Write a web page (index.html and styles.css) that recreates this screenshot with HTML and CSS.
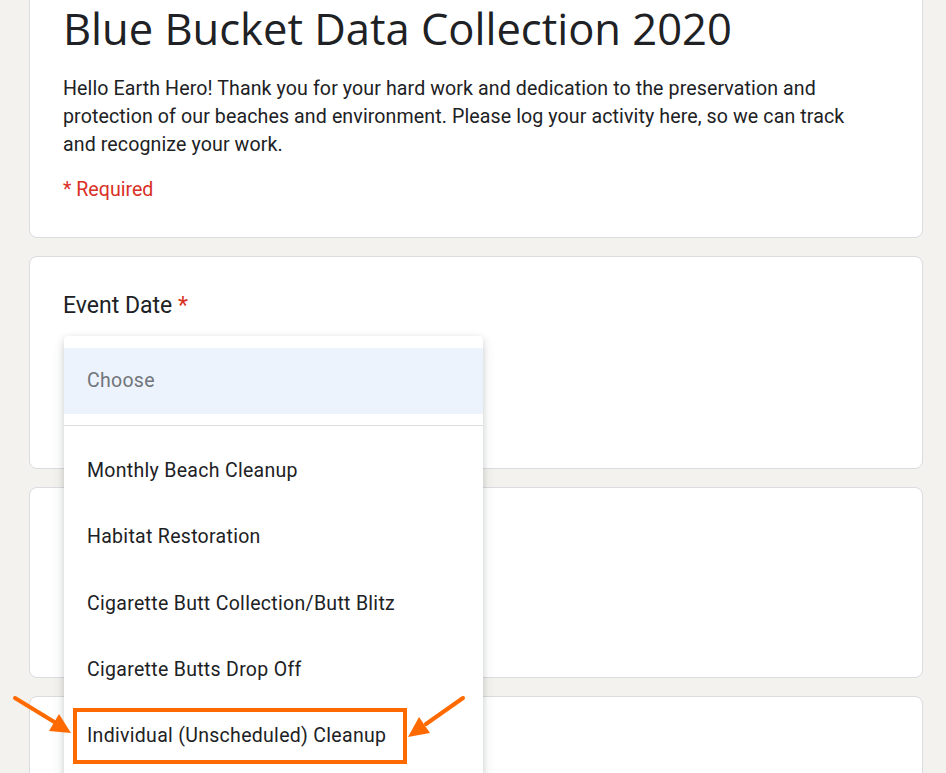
FILE: index.html
```html
<!DOCTYPE html>
<html lang="en">
<head>
<meta charset="utf-8">
<title>Blue Bucket Data Collection 2020</title>
<link rel="stylesheet" href="styles.css">
</head>
<body>
<div class="page">
  <main class="form">
    <section class="card header-card">
      <h1 class="title">Blue Bucket Data Collection 2020</h1>
      <p class="desc">Hello Earth Hero! Thank you for your hard work and dedication to the preservation and protection of our beaches and environment. Please log your activity here, so we can track and recognize your work.</p>
      <p class="required">* Required</p>
    </section>
    <section class="card question-card">
      <div class="q-label">Event Date <span class="star">*</span></div>
      <div class="menu">
        <div class="menu-item placeholder">Choose</div>
        <div class="divider"></div>
        <div class="menu-item">Monthly Beach Cleanup</div>
        <div class="menu-item">Habitat Restoration</div>
        <div class="menu-item">Cigarette Butt Collection/Butt Blitz</div>
        <div class="menu-item">Cigarette Butts Drop Off</div>
        <div class="menu-item marked">Individual (Unscheduled) Cleanup<span class="mark-box"></span></div>
      </div>
    </section>
    <section class="card card-3"></section>
    <section class="card card-4"></section>
  </main>
  <svg class="arrows" width="946" height="773" viewBox="0 0 946 773">
    <g stroke="#ff6a00" stroke-width="4" stroke-linecap="round" fill="#ff6a00">
      <line x1="15" y1="698" x2="56" y2="723"/>
      <polygon stroke="none" points="71,733 49,731 59,714"/>
      <line x1="463" y1="698" x2="426" y2="724"/>
      <polygon stroke="none" points="408,737 430,733 419,717"/>
    </g>
  </svg>
</div>
</body>
</html>
```
FILE: styles.css
```css
html, body {
  margin: 0;
  padding: 0;
  background: #f3f2ee;
  font-family: Roboto, "Noto Sans", Arial, sans-serif;
  color: #202124;
}
.page {
  position: relative;
  width: 946px;
  height: 773px;
  overflow: hidden;
}
.form {
  margin: -40px 0 0 29px;
  width: 894px;
  display: flex;
  flex-direction: column;
  gap: 18px;
}
.card {
  background: #fff;
  border: 1px solid #dadce0;
  border-radius: 8px;
  box-sizing: border-box;
}
.header-card {
  height: 278px;
  padding: 40px 34px 0 33px;
}
.title {
  margin: 0;
  font-family: "Open Sans", Roboto, sans-serif;
  font-weight: 400;
  font-size: 43.5px;
  line-height: 56px;
  letter-spacing: 0;
  color: #202124;
}
.desc {
  margin: 18px 0 0 0;
  max-width: 810px;
  font-size: 19.6px;
  line-height: 28px;
  letter-spacing: 0.1px;
  color: #202124;
}
.required {
  margin: 19px 0 0 0;
  font-size: 19.6px;
  line-height: 24px;
  color: #d93025;
}
.question-card {
  position: relative;
  height: 213px;
  padding: 34px 34px 0 33px;
}
.q-label {
  font-size: 23px;
  line-height: 30px;
  color: #202124;
}
.star { color: #d93025; }
.menu {
  position: absolute;
  left: 34px;
  top: 79px;
  width: 419px;
  height: 520px;
  background: #fff;
  border-radius: 4px;
  box-shadow: 0 2px 6px rgba(60,64,67,0.18), 0 6px 14px rgba(60,64,67,0.12);
  padding-top: 12px;
  box-sizing: border-box;
  z-index: 2;
}
.menu-item {
  position: relative;
  height: 66.3px;
  display: flex;
  align-items: center;
  padding-left: 23px;
  padding-bottom: 2px;
  box-sizing: border-box;
  font-size: 19.5px;
  letter-spacing: 0.3px;
  color: #202124;
}
.placeholder {
  background: #edf3fd;
  color: #70757a;
}
.divider {
  height: 1px;
  background: #dadce0;
  margin: 11px 0 12px 0;
}
.mark-box {
  position: absolute;
  left: 9px;
  top: 5px;
  width: 334px;
  height: 56px;
  border: 4px solid #ff6a00;
  box-sizing: border-box;
}
.card-3 { height: 191px; }
.card-4 { height: 120px; }
.arrows {
  position: absolute;
  left: 0;
  top: 0;
  z-index: 5;
  pointer-events: none;
}
```
